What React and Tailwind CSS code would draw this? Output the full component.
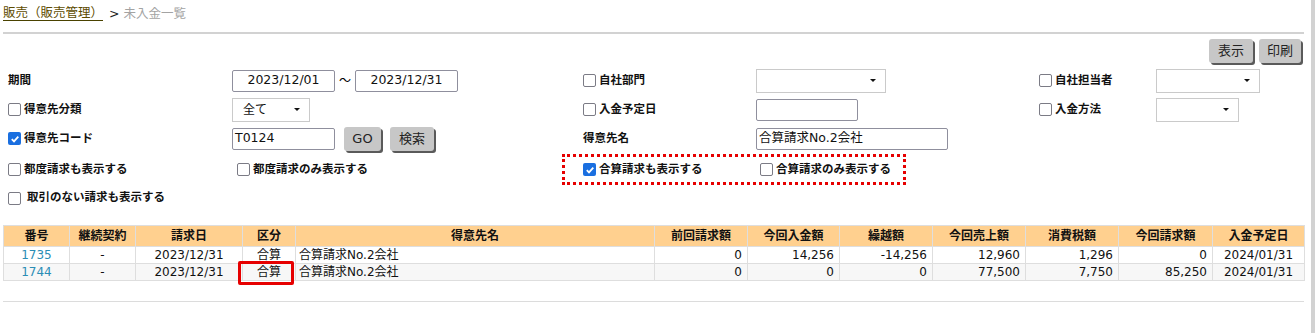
import React from 'react';

const font = { fontFamily: '"DejaVu Sans", "Noto Sans CJK JP", sans-serif' };

function Check({ checked }) {
  if (checked) {
    return (
      <span className="inline-flex h-[13px] w-[13px] shrink-0 items-center justify-center rounded-[2px] bg-[#1a6fe0]">
        <svg width="10" height="10" viewBox="0 0 10 10">
          <path d="M1.8 5.2 L4 7.4 L8.3 2.6" fill="none" stroke="#fff" strokeWidth="1.8" />
        </svg>
      </span>
    );
  }
  return <span className="inline-block h-[13px] w-[13px] shrink-0 rounded-[2px] border-[1.5px] border-[#7b7b85] bg-white" />;
}

function CheckLabel({ checked, children, gap = 'gap-[3px]' }) {
  return (
    <label className={`flex items-center ${gap} text-[11.5px] font-bold text-[#111]`}>
      <Check checked={checked} />
      <span>{children}</span>
    </label>
  );
}

function Select({ w, value }) {
  return (
    <div className={`flex h-[24px] ${w} items-center justify-between border border-[#cacaca] bg-white pl-[10px] pr-[9px] text-[12px] text-[#111]`}>
      <span>{value}</span>
      <span className="h-0 w-0 border-x-[3px] border-t-[3px] border-x-transparent border-t-[#111]" />
    </div>
  );
}

function Input({ w, value, center }) {
  return (
    <div className={`flex h-[22px] ${w} items-center rounded-[2px] border border-[#8f8f9d] bg-white px-[2px] text-[12.5px] text-[#111] ${center ? 'justify-center' : ''}`}>
      {value}
    </div>
  );
}

function GrayButton({ w, children }) {
  return (
    <button className={`h-[24px] ${w} rounded-[3px] bg-[#c7c7c7] text-[13px] text-[#222] shadow-[2px_2px_0_#5a5a5a]`}>
      {children}
    </button>
  );
}

const cols = [66, 66, 107, 53, 359, 93, 92, 93, 93, 93, 94, 92];
const heads = ['番号', '継続契約', '請求日', '区分', '得意先名', '前回請求額', '今回入金額', '繰越額', '今回売上額', '消費税額', '今回請求額', '入金予定日'];
const rows = [
  ['1735', '-', '2023/12/31', '合算', '合算請求No.2会社', '0', '14,256', '-14,256', '12,960', '1,296', '0', '2024/01/31'],
  ['1744', '-', '2023/12/31', '合算', '合算請求No.2会社', '0', '0', '0', '77,500', '7,750', '85,250', '2024/01/31'],
];

function alignFor(i) {
  if (i === 4) return 'text-left pl-[3px]';
  if (i >= 5 && i <= 10) return 'text-right pr-[5px]';
  return 'text-center';
}

export default function App() {
  return (
    <div className="flex h-[333px] w-[1315px] overflow-hidden bg-white" style={font}>
      <div className="w-[1311px]">
        <div className="flex h-[32px] items-start pl-[3px] pt-[6px] text-[12.5px]">
          <span className="border-b border-[#4a4200] text-[#5e4c00] leading-[14px]">販売（販売管理）</span>
          <span className="ml-[6px] text-[#222] leading-[16px]">&gt;</span>
          <span className="ml-[4px] text-[#a3a3a3] leading-[16px]">未入金一覧</span>
        </div>
        <div className="ml-[3px] h-[2px] w-[1301px] bg-[#d2d2d2]" />

        <div className="flex h-[32px] items-start justify-end gap-[6px] pr-[10px] pt-[5px]">
          <GrayButton w="w-[44px]">表示</GrayButton>
          <GrayButton w="w-[42px]">印刷</GrayButton>
        </div>

        <div className="pl-[8px]">
          <div className="flex h-[29px] items-center">
            <div className="w-[224px] text-[11.5px] font-bold text-[#111]">期間</div>
            <div className="flex w-[351px] items-center">
              <Input w="w-[103px]" value="2023/12/01" center />
              <span className="w-[20px] text-center text-[12px]">〜</span>
              <Input w="w-[103px]" value="2023/12/31" center />
            </div>
            <div className="w-[173px]"><CheckLabel>自社部門</CheckLabel></div>
            <div className="w-[283px]"><Select w="w-[130px]" value="" /></div>
            <div className="w-[117px]"><CheckLabel>自社担当者</CheckLabel></div>
            <Select w="w-[104px]" value="" />
          </div>

          <div className="flex h-[29px] items-center">
            <div className="w-[224px]"><CheckLabel>得意先分類</CheckLabel></div>
            <div className="w-[351px]"><Select w="w-[78px]" value="全て" /></div>
            <div className="w-[173px]"><CheckLabel>入金予定日</CheckLabel></div>
            <div className="w-[283px]"><Input w="w-[102px]" value="" /></div>
            <div className="w-[117px]"><CheckLabel>入金方法</CheckLabel></div>
            <Select w="w-[83px]" value="" />
          </div>

          <div className="flex h-[29px] items-center">
            <div className="w-[224px]"><CheckLabel checked>得意先コード</CheckLabel></div>
            <div className="flex w-[351px] items-center gap-[9px]">
              <Input w="w-[103px]" value="T0124" />
              <GrayButton w="w-[37px]">GO</GrayButton>
              <GrayButton w="w-[44px]">検索</GrayButton>
            </div>
            <div className="w-[173px] text-[11.5px] font-bold text-[#111]">得意先名</div>
            <Input w="w-[192px]" value="合算請求No.2会社" />
          </div>

          <div className="flex h-[33px] items-center">
            <div className="w-[224px]"><CheckLabel>都度請求も表示する</CheckLabel></div>
            <div className="w-[330px] pl-[5px]"><CheckLabel>都度請求のみ表示する</CheckLabel></div>
            <div className="flex h-[31px] w-[344px] items-center border-[3px] border-dotted border-[#e60000] pl-[18px]">
              <div className="w-[177px]"><CheckLabel checked>合算請求も表示する</CheckLabel></div>
              <CheckLabel>合算請求のみ表示する</CheckLabel>
            </div>
          </div>

          <div className="flex h-[24px] items-center">
            <CheckLabel gap="gap-[6px]">取引のない請求も表示する</CheckLabel>
          </div>
        </div>

        <div className="mt-[15px] pl-[3px]">
          <table className="w-[1301px] table-fixed border-collapse text-[12px] text-[#111]">
            <colgroup>
              {cols.map((c, i) => (
                <col key={i} style={{ width: c }} />
              ))}
            </colgroup>
            <thead>
              <tr className="h-[21px] bg-[#ffd08f]">
                {heads.map((h, i) => (
                  <th key={i} className="border border-[#dedede] px-0 text-center font-bold">
                    {h}
                  </th>
                ))}
              </tr>
            </thead>
            <tbody>
              {rows.map((r, ri) => (
                <tr key={ri} className={`h-[17px] ${ri === 1 ? 'bg-[#f7f7f7]' : 'bg-white'}`}>
                  {r.map((v, i) => (
                    <td key={i} className={`relative border border-[#dedede] p-0 leading-[15px] ${alignFor(i)} ${i === 0 ? 'text-[#2a8db5]' : ''}`}>
                      {v}
                      {ri === 1 && i === 3 && (
                        <span className="absolute left-[-5px] top-[-3px] h-[24px] w-[56px] rounded-[2px] border-[3px] border-[#e60000]" />
                      )}
                    </td>
                  ))}
                </tr>
              ))}
            </tbody>
          </table>
        </div>
        <div className="ml-[3px] mt-[20px] h-[1px] w-[1301px] bg-[#dcdcdc]" />
      </div>
      <div className="h-[333px] w-[4px] bg-[#d2d2d2]" />
    </div>
  );
}
